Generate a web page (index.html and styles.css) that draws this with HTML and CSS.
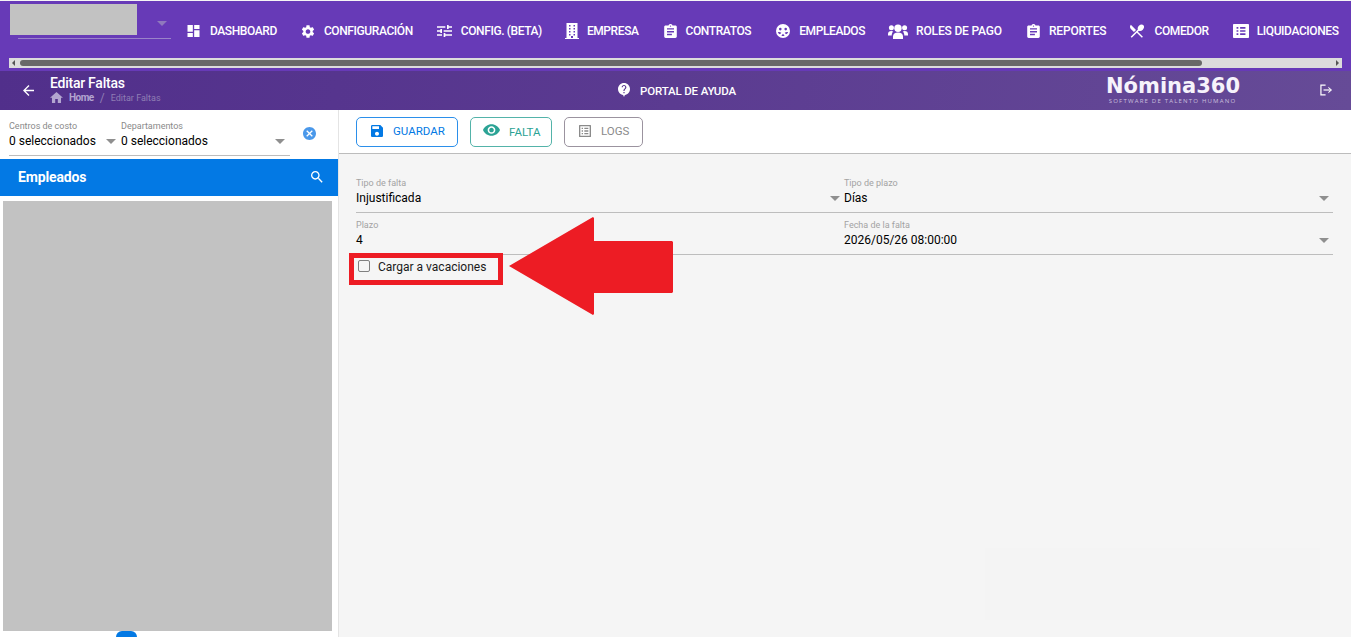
FILE: index.html
```html
<!DOCTYPE html>
<html lang="es">
  <head>
    <meta charset="UTF-8" />
    <title>Editar Faltas</title>
    <meta name="viewport" content="width=device-width, initial-scale=1" />
    <link rel="stylesheet" href="styles.css">
  </head>

  <body>
    <!-- Top menu -->
    <div class="topbar">
      <div class="menu-row">
        <div class="company">
          <div class="company-logo"></div>
          <div class="company-select"><span class="caret"></span></div>
        </div>
        <nav class="menu">
          <a class="menu-item"><svg class="ico ico-dash" viewBox="3 3 18 18"><path d="M3 13h8V3H3v10zm0 8h8v-6H3v6zm10 0h8V11h-8v10zm0-18v6h8V3h-8z"/></svg>DASHBOARD</a>
          <a class="menu-item"><svg class="ico ico-conf" viewBox="2.5 2 19 20"><path d="M19.14 12.94c.04-.3.06-.61.06-.94 0-.32-.02-.64-.07-.94l2.03-1.58c.18-.14.23-.41.12-.61l-1.92-3.32c-.12-.22-.37-.29-.59-.22l-2.39.96c-.5-.38-1.03-.7-1.62-.94l-.36-2.54c-.04-.24-.24-.41-.48-.41h-3.84c-.24 0-.43.17-.47.41l-.36 2.54c-.59.24-1.13.57-1.62.94l-2.39-.96c-.22-.08-.47 0-.59.22L2.74 8.87c-.12.21-.08.47.12.61l2.03 1.58c-.05.3-.09.63-.09.94s.02.64.07.94l-2.03 1.58c-.18.14-.23.41-.12.61l1.92 3.32c.12.22.37.29.59.22l2.39-.96c.5.38 1.03.7 1.62.94l.36 2.54c.05.24.24.41.48.41h3.84c.24 0 .44-.17.47-.41l.36-2.54c.59-.24 1.13-.56 1.62-.94l2.39.96c.22.08.47 0 .59-.22l1.92-3.32c.12-.22.07-.47-.12-.61l-2.01-1.58zM12 15.6c-1.98 0-3.6-1.62-3.6-3.6s1.62-3.6 3.6-3.6 3.6 1.62 3.6 3.6-1.62 3.6-3.6 3.6z"/></svg>CONFIGURACIÓN</a>
          <a class="menu-item"><svg class="ico ico-tune" viewBox="3 3 18 18" preserveAspectRatio="none"><path d="M3 17v2h6v-2H3zM3 5v2h10V5H3zm10 16v-2h8v-2h-8v-2h-2v6h2zM7 9v2H3v2h4v2h2V9H7zm14 4v-2H11v2h10zm-6-4h2V7h4V5h-4V3h-2v6z"/></svg>CONFIG. (BETA)</a>
          <a class="menu-item"><svg class="ico ico-empresa" viewBox="0 0 14 16"><path fill-rule="evenodd" d="M1.500 0h11v15H14v1H0v-1h1.500zM4 2v1.500h1.500V2zm0 3v1.500h1.500V5zm0 3v1.500h1.500V8zm0 3v1.500h1.500V11zM8.500 2v1.500H10V2zm0 3v1.500H10V5zm0 3v1.500H10V8zm0 3v1.500H10V11zM6 13v2h2v-2z"/></svg>EMPRESA</a>
          <a class="menu-item"><svg class="ico ico-clip" viewBox="3 1 18 20"><path d="M19 3h-4.180C14.400 1.840 13.300 1 12 1c-1.300 0-2.400.840-2.820 2H5c-1.100 0-2 .900-2 2v14c0 1.100.900 2 2 2h14c1.100 0 2-.900 2-2V5c0-1.100-.900-2-2-2zm-7 0c.550 0 1 .450 1 1s-.450 1-1 1-1-.450-1-1 .450-1 1-1zm2 14H7v-2h7v2zm3-4H7v-2h10v2zm0-4H7V7h10v2z"/></svg>CONTRATOS</a>
          <a class="menu-item"><svg class="ico ico-face" viewBox="0 0 14 14"><path fill-rule="evenodd" d="M7 0a7 7 0 1 1 0 14A7 7 0 0 1 7 0zM4.300 3.800a1.300 1.300 0 1 0 0 2.600 1.300 1.300 0 0 0 0-2.600zm5.400 0a1.300 1.300 0 1 0 0 2.600 1.300 1.300 0 0 0 0-2.600zM1.800 8.200C2.200 9 3 10 4 10.300l1.300-1.500C4.400 8 3 7.800 1.800 8.200zm10.400 0c-1.200-.400-2.600-.200-3.500.600l1.300 1.500c1-.300 1.800-1.300 2.200-2.100zM7 9.800 5.400 11.700c1 .500 2.200.500 3.200 0z"/></svg>EMPLEADOS</a>
          <a class="menu-item menu-roles"><svg class="ico ico-users" viewBox="0 0 20 15"><circle cx="10" cy="4.200" r="3.700"/><circle cx="3.400" cy="3.800" r="2.500"/><circle cx="16.600" cy="3.800" r="2.500"/><path d="M5 15v-2.500C5 10 7 8.600 10 8.600s5 1.400 5 3.900V15zM0 10c0-2 1.300-3 3.300-3 .800 0 1.400.200 1.900.500C4.200 8.600 3.700 9.800 3.700 11.500H0zM20 10c0-2-1.300-3-3.300-3-.800 0-1.400.200-1.900.500 1 1.100 1.500 2.300 1.500 4H20z"/></svg>ROLES DE PAGO</a>
          <a class="menu-item menu-reportes"><svg class="ico ico-clip" viewBox="3 1 18 20"><path d="M19 3h-4.180C14.400 1.840 13.300 1 12 1c-1.300 0-2.400.840-2.820 2H5c-1.100 0-2 .900-2 2v14c0 1.100.900 2 2 2h14c1.100 0 2-.900 2-2V5c0-1.100-.900-2-2-2zm-7 0c.550 0 1 .450 1 1s-.450 1-1 1-1-.450-1-1 .450-1 1-1zm2 14H7v-2h7v2zm3-4H7v-2h10v2zm0-4H7V7h10v2z"/></svg>REPORTES</a>
          <a class="menu-item"><svg class="ico ico-food" viewBox="3 2.500 18.500 19"><path d="M8.100 13.340l2.830-2.830L3.910 3.500c-1.560 1.560-1.560 4.090 0 5.660l4.190 4.180zm6.780-1.810c1.530.710 3.680.210 5.270-1.380 1.910-1.910 2.280-4.650.810-6.120-1.460-1.460-4.200-1.100-6.120.810-1.590 1.590-2.090 3.740-1.380 5.270L3.700 19.870l1.410 1.410L12 14.410l6.880 6.880 1.410-1.410L13.410 13l1.470-1.470z"/></svg>COMEDOR</a>
          <a class="menu-item"><svg class="ico ico-list" viewBox="3 3 18 18" preserveAspectRatio="none"><path fill-rule="evenodd" d="M20.100 3H3.900c-.500 0-.900.400-.900.900v16.200c0 .400.400.900.900.900h16.200c.400 0 .900-.500.900-.900V3.900c0-.500-.500-.900-.900-.900zM9 17H7v-2h2zm0-4H7v-2h2zm0-4H7V7h2zm8 8h-6v-2h6zm0-4h-6v-2h6zm0-4h-6V7h6z"/></svg>LIQUIDACIONES</a>
        </nav>
      </div>
      <div class="hscroll">
        <span class="hscroll-left"></span>
        <div class="hscroll-thumb"></div>
        <span class="hscroll-right"></span>
      </div>
    </div>

    <!-- Page title bar -->
    <div class="titlebar">
      <svg class="back" viewBox="4 4 16 16"><path d="M20 11H7.830l5.590-5.590L12 4l-8 8 8 8 1.410-1.410L7.830 13H20v-2z"/></svg>
      <div class="title-block">
        <div class="title">Editar Faltas</div>
        <div class="crumbs">
          <svg class="crumb-home" viewBox="2 3 20 17"><path d="M10 20v-6h4v6h5v-8h3L12 3 2 12h3v8z"/></svg>
          <span class="crumb-link">Home</span>
          <span class="crumb-sep">/</span>
          <span>Editar Faltas</span>
        </div>
      </div>
      <div class="help">
        <svg class="help-ico" viewBox="2 2 20 23"><path fill-rule="evenodd" d="M12 2C6.480 2 2 6.480 2 12c0 5 3.700 9.100 8.500 9.900L12 25l1.500-3.100C18.300 21.100 22 17 22 12c0-5.520-4.480-10-10-10zm1 17h-2v-2h2v2zm2.070-7.750l-.900.920C13.450 12.900 13 13.500 13 15h-2v-.500c0-1.100.450-2.100 1.170-2.830l1.240-1.260c.370-.360.590-.860.590-1.410 0-1.100-.900-2-2-2s-2 .900-2 2H8c0-2.210 1.790-4 4-4s4 1.790 4 4c0 .880-.360 1.680-.930 2.250z"/></svg>
        PORTAL DE AYUDA
      </div>
      <div class="brand">
        <div class="brand-name">Nómina360</div>
        <div class="brand-sub">SOFTWARE DE TALENTO HUMANO</div>
      </div>
      <svg class="logout" viewBox="0 0 14 12"><path d="M6 .700H1v10.600h5" fill="none" stroke="#fff" stroke-width="1.300"/><path d="M3.800 5.350h7v1.300h-7z"/><path d="M9 2.500 13 6 9 9.500V8.100L11.300 6 9 3.900z"/></svg>
    </div>

    <div class="main">
      <!-- Left column -->
      <aside class="sidebar">
        <div class="filters">
          <div class="filter-fields">
            <div class="filter filter-cost">
              <label>Centros de costo</label>
              <div class="filter-value">0 seleccionados<span class="caret caret-dark"></span></div>
            </div>
            <div class="filter filter-dept">
              <label>Departamentos</label>
              <div class="filter-value">0 seleccionados<span class="caret caret-dark"></span></div>
            </div>
          </div>
          <svg class="clear" viewBox="2 2 20 20"><path d="M12 2C6.470 2 2 6.470 2 12s4.470 10 10 10 10-4.470 10-10S17.530 2 12 2zm5 13.590L15.590 17 12 13.410 8.410 17 7 15.590 10.590 12 7 8.410 8.410 7 12 10.590 15.590 7 17 8.410 13.410 12 17 15.590z"/></svg>
        </div>
        <div class="list-head">
          <span>Empleados</span>
          <svg class="search" viewBox="3 3 18 18"><path d="M15.500 14h-.790l-.280-.270C15.410 12.590 16 11.110 16 9.500 16 5.910 13.090 3 9.500 3S3 5.910 3 9.500 5.910 16 9.500 16c1.610 0 3.090-.590 4.230-1.570l.270.280v.790l5 4.990L20.490 19l-4.990-5zm-6 0C7.010 14 5 11.990 5 9.500S7.010 5 9.500 5 14 7.010 14 9.500 11.990 14 9.500 14z"/></svg>
        </div>
        <div class="list-box"></div>
        <div class="list-handle"></div>
      </aside>

      <!-- Form -->
      <section class="content">
        <div class="toolbar">
          <button class="btn btn-blue"><svg viewBox="3 3 18 18"><path d="M17 3H5c-1.110 0-2 .900-2 2v14c0 1.100.890 2 2 2h14c1.100 0 2-.900 2-2V7l-4-4zm-5 16c-1.660 0-3-1.340-3-3s1.340-3 3-3 3 1.340 3 3-1.340 3-3 3zm3-10H5V5h10v4z"/></svg>GUARDAR</button>
          <button class="btn btn-teal"><svg class="eye" viewBox="1 4.500 22 15"><path d="M12 4.500C7 4.500 2.730 7.610 1 12c1.730 4.390 6 7.500 11 7.500s9.270-3.110 11-7.500c-1.730-4.390-6-7.500-11-7.500zM12 17c-2.760 0-5-2.240-5-5s2.240-5 5-5 5 2.240 5 5-2.240 5-5 5zm0-8c-1.660 0-3 1.340-3 3s1.340 3 3 3 3-1.340 3-3-1.340-3-3-3z"/></svg><span class="btn-low">FALTA</span></button>
          <button class="btn btn-gray"><svg viewBox="3 3 18 18"><path fill-rule="evenodd" d="M19 5v14H5V5h14m1.100-2H3.900c-.500 0-.900.400-.900.900v16.200c0 .400.400.900.900.900h16.200c.400 0 .900-.500.900-.900V3.900c0-.500-.500-.900-.900-.900zM11 7h6v2h-6V7zm0 4h6v2h-6v-2zm0 4h6v2h-6zM7 7h2v2H7zm0 4h2v2H7zm0 4h2v2H7z"/></svg>LOGS</button>
        </div>

        <div class="form">
          <div class="field">
            <label>Tipo de falta</label>
            <div class="field-value">Injustificada<span class="caret caret-dark"></span></div>
          </div>
          <div class="field">
            <label>Tipo de plazo</label>
            <div class="field-value">Días<span class="caret caret-dark"></span></div>
          </div>
          <div class="field">
            <label>Plazo</label>
            <div class="field-value">4</div>
          </div>
          <div class="field">
            <label>Fecha de la falta</label>
            <div class="field-value">2026/05/26 08:00:00<span class="caret caret-dark"></span></div>
          </div>
          <label class="check">
            <span class="check-box"></span>
            Cargar a vacaciones
          </label>
        </div>
      </section>
    </div>

    <!-- Annotations drawn over the screenshot -->
    <div class="mark-box"></div>
    <svg class="mark-arrow" viewBox="0 0 165 100"><path d="M1 50 85 1l1 1v23h78l1 1v50l-1 1H86v21l-1 1z"/></svg>
    <div class="ghost"></div>
  </body>
</html>
```

FILE: styles.css
```css
* {
  box-sizing: border-box;
}

html,
body {
  height: 637px;
  overflow: hidden;
}

body {
  margin: 0;
  font-family: Roboto, "Liberation Sans", sans-serif;
  background-color: #f5f5f5;
  color: #000;
  display: flex;
  flex-direction: column;
  position: relative;
}

svg {
  display: block;
  fill: currentColor;
  flex: none;
}

/* top menu */
.topbar {
  height: 70px;
  margin-top: 1px;
  background-color: #673ab7;
  color: #fff;
  flex: none;
}

.menu-row {
  height: 57px;
  display: flex;
}

.company {
  width: 187px;
  padding: 3px 16px 0 10px;
  flex: none;
}

.company-logo {
  width: 127px;
  height: 31px;
  background-color: #c2c2c2;
}

.company-select {
  width: 153px;
  height: 4px;
  margin-left: 8px;
  border-bottom: 1px solid #9a83c9;
  position: relative;
}

.company-select .caret {
  position: absolute;
  right: 4px;
  top: -14px;
  border-top-color: #8f79bd;
}

.menu {
  display: flex;
  align-items: flex-start;
  gap: 24px;
  padding-top: 22px;
  white-space: nowrap;
}

.menu-item {
  display: flex;
  align-items: center;
  height: 16px;
  font-size: 12px;
  font-weight: 500;
  letter-spacing: -0.4px;
}

.menu-roles {
  letter-spacing: -0.17px;
}

.menu-reportes {
  letter-spacing: -0.15px;
}

.ico {
  width: 13px;
  height: 13px;
  margin-right: 10px;
}

.ico-dash {
  height: 12px;
}

.ico-conf {
  width: 14px;
  margin-right: 9px;
}

.ico-tune {
  width: 15px;
  height: 12px;
  margin-right: 9px;
}

.ico-empresa {
  width: 14px;
  height: 16px;
  margin-left: -1px;
  margin-right: 8px;
}

.ico-clip {
  height: 14px;
  margin-left: 1px;
  margin-right: 9px;
}

.ico-face {
  width: 14px;
  height: 14px;
  margin-left: 1px;
  margin-right: 9px;
}

.ico-users {
  width: 20px;
  height: 15px;
  margin-left: -1px;
  margin-right: 8px;
}

.ico-food {
  width: 14px;
  height: 14px;
}

.ico-list {
  width: 16px;
  height: 14px;
  margin-right: 8px;
}

.hscroll {
  height: 10px;
  margin: 0 9px;
  background-color: #dcdcdc;
  display: flex;
  align-items: center;
  padding: 0 2px;
}

.hscroll-left {
  width: 0;
  height: 0;
  margin: 0 5px 0 1px;
  border-top: 3px solid transparent;
  border-bottom: 3px solid transparent;
  border-right: 3px solid #555;
}

.hscroll-thumb {
  width: 1182px;
  height: 6px;
  background-color: #686868;
  border-radius: 3px;
}

.hscroll-right {
  width: 0;
  height: 0;
  margin-left: auto;
  margin-right: 1px;
  border-top: 3px solid transparent;
  border-bottom: 3px solid transparent;
  border-left: 3px solid #555;
}

/* title bar */
.titlebar {
  height: 39px;
  background: linear-gradient(100deg, #512f8b 0%, #5b3b91 50%, #664b97 100%);
  color: #fff;
  display: flex;
  align-items: center;
  flex: none;
  padding-left: 23px;
}

.back {
  width: 11px;
  height: 11px;
  margin-right: 16px;
}

.title-block {
  width: 302px;
  flex: none;
  margin-top: -2px;
}

.title {
  font-size: 14px;
  font-weight: 500;
  line-height: 16px;
  letter-spacing: -0.25px;
}

.crumbs {
  display: flex;
  align-items: center;
  font-size: 9px;
  line-height: 14px;
  color: #8f7db4;
}

.crumb-home {
  width: 13px;
  height: 11px;
  margin-right: 6px;
  color: #b3a5d0;
}

.crumb-link {
  color: #b3a5d0;
  font-size: 10px;
  font-weight: 700;
  letter-spacing: -0.5px;
}

.crumb-sep {
  margin: 0 6px;
  font-size: 12px;
}

.help {
  display: flex;
  align-items: center;
  width: 754px;
  flex: none;
  padding-left: 266px;
  font-size: 11.500px;
  font-weight: 500;
  letter-spacing: -0.15px;
  margin-top: 1px;
}

.help-ico {
  width: 12px;
  height: 14px;
  margin-right: 10px;
  margin-top: -3px;
}

.brand {
  width: 133px;
  margin-bottom: 4px;
  flex: none;
  text-align: center;
}

.brand-name {
  font-family: "DejaVu Sans", sans-serif;
  font-size: 21px;
  font-weight: 700;
  line-height: 21px;
  color: #f6f3fb;
  margin-top: 3px;
}

.brand-sub {
  font-family: "Open Sans", sans-serif;
  font-size: 6px;
  line-height: 8px;
  letter-spacing: 1.200px;
  color: #c9bfdd;
  white-space: nowrap;
}

.logout {
  width: 13px;
  height: 12px;
  margin-left: 81px;
  margin-top: -2px;
}

/* main area */
.main {
  flex: 1;
  display: flex;
  min-height: 0;
}

.sidebar {
  width: 339px;
  flex: none;
  background-color: #fff;
  border-right: 1px solid #e4e4e4;
  display: flex;
  flex-direction: column;
}

.filters {
  height: 49px;
  display: flex;
  padding: 10px 0 0 9px;
  flex: none;
}

.filter-fields {
  width: 281px;
  height: 36px;
  display: flex;
  border-bottom: 1px solid #bdbdbd;
}

.filter label {
  display: block;
  font-size: 9px;
  line-height: 12px;
  color: #8a8a8a;
}

.filter-value {
  font-size: 12px;
  line-height: 16px;
  margin-top: 1px;
  position: relative;
}

.filter-cost {
  width: 112px;
}

.filter-dept {
  flex: 1;
}

.filter-value .caret {
  position: absolute;
  right: 5px;
  top: 6px;
}

.clear {
  width: 13px;
  height: 13px;
  margin: 7px 0 0 13px;
  color: #4a98ea;
}

.list-head {
  height: 37px;
  flex: none;
  background-color: #0379e4;
  color: #fff;
  display: flex;
  align-items: center;
  justify-content: space-between;
  padding: 0 15px 2px 18px;
  font-size: 14px;
  font-weight: 700;
  letter-spacing: -0.15px;
}

.search {
  width: 12px;
  height: 12px;
}

.list-box {
  width: 329px;
  height: 430px;
  margin: 5px 0 0 3px;
  background-color: #c2c2c2;
  flex: none;
}

.list-handle {
  width: 21px;
  height: 6px;
  margin-left: 116px;
  background-color: #0379e4;
  border-radius: 8px 8px 0 0;
  flex: none;
}

.content {
  flex: 1;
  min-width: 0;
}

.toolbar {
  height: 44px;
  background-color: #fff;
  border-bottom: 1px solid #bcbcbc;
  display: flex;
  gap: 12px;
  padding: 7px 0 0 17px;
}

.btn {
  height: 30px;
  background: #fff;
  border: 1px solid;
  border-radius: 5px;
  display: flex;
  align-items: center;
  font-family: inherit;
  font-size: 11.500px;
  font-weight: 400;
  padding: 0 0 2px;
}

.btn svg {
  width: 12px;
  height: 12px;
  margin-right: 10px;
  margin-bottom: 1px;
}

.btn-blue {
  width: 102px;
  padding-left: 14px;
  border-color: #2b8fea;
  color: #0379e4;
}

.btn-teal {
  width: 82px;
  padding-left: 12px;
  border-color: #53b3a9;
  color: #2ba395;
}

.btn-teal svg {
  width: 17px;
  height: 12px;
  margin-right: 9px;
  margin-bottom: 2px;
}

.btn-low {
  margin-top: 2px;
}

.btn-gray {
  width: 79px;
  padding-left: 14px;
  border-color: #9b939f;
  color: #8a8a8a;
}

.form {
  display: grid;
  grid-template-columns: 488px 489px;
  padding: 17px 0 0 17px;
}

.field {
  height: 42px;
  border-bottom: 1px solid #bdbdbd;
}

.field label {
  display: block;
  font-size: 9px;
  line-height: 12px;
  padding-top: 6px;
  height: 19px;
  color: #a3a3a3;
}

.field-value {
  font-size: 12px;
  line-height: 16px;
  position: relative;
}

.field-value .caret {
  position: absolute;
  right: 4px;
  top: 6px;
}

.check {
  grid-column: 1 / span 2;
  display: flex;
  align-items: center;
  height: 24px;
  padding: 0 0 0 2px;
  font-size: 12px;
  color: #1a1a1a;
}

.check-box {
  width: 12px;
  height: 12px;
  margin-right: 8px;
  margin-top: -2px;
  border: 1px solid #808080;
  border-radius: 2px;
}

.caret {
  display: inline-block;
  width: 0;
  height: 0;
  border-left: 5px solid transparent;
  border-right: 5px solid transparent;
  border-top: 5px solid #fff;
}

.caret-dark {
  border-top-color: #8f8f8f;
}

/* annotations */
.mark-box {
  position: absolute;
  left: 349px;
  top: 253px;
  width: 154px;
  height: 32px;
  border: 5px solid #ed1c24;
}

.mark-arrow {
  position: absolute;
  left: 508px;
  top: 216px;
  width: 165px;
  height: 100px;
  fill: #ed1c24;
}

.ghost {
  position: absolute;
  left: 985px;
  top: 548px;
  width: 335px;
  height: 72px;
  background-color: #f4f4f4;
}
```
